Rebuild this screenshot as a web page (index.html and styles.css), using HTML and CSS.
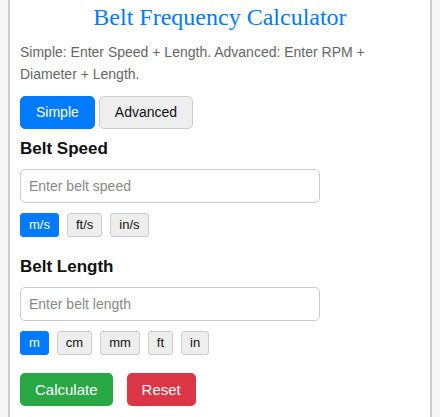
FILE: index.html
```html
<!DOCTYPE html>
<html lang="en">
<head>
    <meta charset="UTF-8">
    <meta name="viewport" content="width=device-width, initial-scale=1.0">
    <title>Belt Frequency Calculator</title>
    <link rel="stylesheet" href="styles.css">
</head>
<body>

<div class="calculator">
    <h1>Belt Frequency Calculator</h1>
    <p class="intro">Simple: Enter Speed + Length. Advanced: Enter RPM + Diameter + Length.</p>

    <div class="mode-buttons">
        <button class="mode-button active">Simple</button>
        <button class="mode-button">Advanced</button>
    </div>

    <div class="section">
        <h3>Belt Speed</h3>
        <input type="text" class="value-input" placeholder="Enter belt speed">
        <div class="unit-buttons">
            <button class="unit-button active">m/s</button>
            <button class="unit-button">ft/s</button>
            <button class="unit-button">in/s</button>
        </div>
    </div>

    <div class="section">
        <h3>Belt Length</h3>
        <input type="text" class="value-input" placeholder="Enter belt length">
        <div class="unit-buttons">
            <button class="unit-button active">m</button>
            <button class="unit-button">cm</button>
            <button class="unit-button">mm</button>
            <button class="unit-button">ft</button>
            <button class="unit-button">in</button>
        </div>
    </div>

    <div class="action-buttons">
        <button class="action-button calculate">Calculate</button>
        <button class="action-button reset">Reset</button>
    </div>
</div>

</body>
</html>
```

FILE: styles.css
```css
body {
    margin: 0 8px;
    font-family: "Liberation Sans", Arial, sans-serif;
    background-color: #f7f7f7;
}
.calculator {
    background: white;
    border: 2px solid #ccc;
    border-top: none;
    padding: 4px 10px 20px;
}
h1 {
    margin: 0 0 10px;
    font-family: "Liberation Serif", "Times New Roman", serif;
    font-size: 24px;
    font-weight: normal;
    text-align: center;
    color: #007bff;
}
.intro {
    margin: 0 0 10px;
    font-size: 14px;
    line-height: 1.6;
    color: #666;
}
.mode-buttons {
    display: flex;
    gap: 4px;
}
button {
    font-family: "Liberation Sans", Arial, sans-serif;
    cursor: pointer;
}
.mode-button {
    padding: 7.5px 15px;
    font-size: 14px;
    color: #111;
    background-color: #eee;
    border: 1px solid #ccc;
    border-radius: 5px;
}
.mode-button.active {
    color: white;
    background-color: #007bff;
    border-color: #007bff;
}
.section {
    margin-bottom: 18px;
}
.section h3 {
    margin: 10px 0;
    font-size: 17px;
    color: #111;
}
.section + .section h3 {
    margin-top: 20px;
}
.value-input {
    display: block;
    box-sizing: border-box;
    width: 300px;
    padding: 8px;
    font-family: "Liberation Sans", Arial, sans-serif;
    font-size: 14px;
    border: 1px solid #ccc;
    border-radius: 5px;
}
.value-input::placeholder {
    color: #888;
}
.unit-buttons {
    display: flex;
    gap: 8px;
    margin-top: 10px;
}
.unit-button {
    padding: 3.5px 8px;
    font-size: 13px;
    color: #111;
    background-color: #eee;
    border: 1px solid #ccc;
    border-radius: 3px;
}
.unit-button.active {
    color: white;
    background-color: #007bff;
    border-color: #007bff;
}
.action-buttons {
    display: flex;
    gap: 14px;
}
.action-button {
    padding: 8px 15px;
    font-size: 15px;
    color: white;
    border: none;
    border-radius: 5px;
}
.calculate {
    background-color: #28a745;
}
.reset {
    background-color: #dc3545;
}
```
